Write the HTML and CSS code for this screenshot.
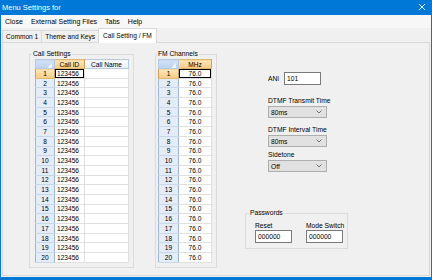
FILE: index.html
```html
<!DOCTYPE html>
<html lang="en">
<head>
  <meta charset="UTF-8">
  <title>Menu Settings</title>
  <link rel="stylesheet" href="styles.css">
</head>
<body>
  <div class="window">
    <!-- Title bar -->
    <div class="titlebar">
      <span class="title">Menu Settings for</span>
      <svg class="close-x" width="6" height="6" viewBox="0 0 6 6"><path d="M0 0 L6 6 M6 0 L0 6" stroke="#fff" stroke-width="0.9"/></svg>
    </div>

    <!-- Menu -->
    <div class="menubar">
      <span class="menu-item">Close</span>
      <span class="menu-item">External Setting Files</span>
      <span class="menu-item">Tabs</span>
      <span class="menu-item">Help</span>
    </div>

    <!-- Tabs -->
    <div class="tabstrip">
      <div class="tab">Common 1</div>
      <div class="tab">Theme and Keys</div>
      <div class="tab active">Call Setting / FM</div>
    </div>

    <div class="tabpage">
      <fieldset class="group calls">
        <legend>Call Settings</legend>
        <table class="grid">
          <colgroup><col class="c-head"><col class="c-id"><col class="c-name"></colgroup>
          <tr><th class="corner"><svg width="5" height="5" viewBox="0 0 5 5"><path d="M5 0 L5 5 L0 5 Z" fill="#f2f5f9"/></svg></th><th class="sel">Call ID</th><th>Call Name</th></tr>
          <tr><th class="sel">1</th><td class="cur">123456</td><td></td></tr>
          <tr><th>2</th><td>123456</td><td></td></tr>
          <tr><th>3</th><td>123456</td><td></td></tr>
          <tr><th>4</th><td>123456</td><td></td></tr>
          <tr><th>5</th><td>123456</td><td></td></tr>
          <tr><th>6</th><td>123456</td><td></td></tr>
          <tr><th>7</th><td>123456</td><td></td></tr>
          <tr><th>8</th><td>123456</td><td></td></tr>
          <tr><th>9</th><td>123456</td><td></td></tr>
          <tr><th>10</th><td>123456</td><td></td></tr>
          <tr><th>11</th><td>123456</td><td></td></tr>
          <tr><th>12</th><td>123456</td><td></td></tr>
          <tr><th>13</th><td>123456</td><td></td></tr>
          <tr><th>14</th><td>123456</td><td></td></tr>
          <tr><th>15</th><td>123456</td><td></td></tr>
          <tr><th>16</th><td>123456</td><td></td></tr>
          <tr><th>17</th><td>123456</td><td></td></tr>
          <tr><th>18</th><td>123456</td><td></td></tr>
          <tr><th>19</th><td>123456</td><td></td></tr>
          <tr><th>20</th><td>123456</td><td></td></tr>
        </table>
      </fieldset>

      <fieldset class="group fm">
        <legend>FM Channels</legend>
        <table class="grid">
          <colgroup><col class="c-head2"><col class="c-mhz"></colgroup>
          <tr><th class="corner"><svg width="5" height="5" viewBox="0 0 5 5"><path d="M5 0 L5 5 L0 5 Z" fill="#f2f5f9"/></svg></th><th class="sel">MHz</th></tr>
          <tr><th class="sel">1</th><td class="cur mid">76.0</td></tr>
          <tr><th>2</th><td class="mid">76.0</td></tr>
          <tr><th>3</th><td class="mid">76.0</td></tr>
          <tr><th>4</th><td class="mid">76.0</td></tr>
          <tr><th>5</th><td class="mid">76.0</td></tr>
          <tr><th>6</th><td class="mid">76.0</td></tr>
          <tr><th>7</th><td class="mid">76.0</td></tr>
          <tr><th>8</th><td class="mid">76.0</td></tr>
          <tr><th>9</th><td class="mid">76.0</td></tr>
          <tr><th>10</th><td class="mid">76.0</td></tr>
          <tr><th>11</th><td class="mid">76.0</td></tr>
          <tr><th>12</th><td class="mid">76.0</td></tr>
          <tr><th>13</th><td class="mid">76.0</td></tr>
          <tr><th>14</th><td class="mid">76.0</td></tr>
          <tr><th>15</th><td class="mid">76.0</td></tr>
          <tr><th>16</th><td class="mid">76.0</td></tr>
          <tr><th>17</th><td class="mid">76.0</td></tr>
          <tr><th>18</th><td class="mid">76.0</td></tr>
          <tr><th>19</th><td class="mid">76.0</td></tr>
          <tr><th>20</th><td class="mid">76.0</td></tr>
        </table>
      </fieldset>

      <div class="side">
        <div class="ani-row">
          <span class="ani-label">ANI</span>
          <div class="textbox ani">101</div>
        </div>

        <div class="field first">
          <div class="field-label">DTMF Transmit Time</div>
          <div class="combo">80ms<svg width="6" height="4" viewBox="0 0 6 4"><path d="M0.5 0.5 L3 3 L5.5 0.5" fill="none" stroke="#555" stroke-width="0.8"/></svg></div>
        </div>
        <div class="field">
          <div class="field-label">DTMF Interval Time</div>
          <div class="combo">80ms<svg width="6" height="4" viewBox="0 0 6 4"><path d="M0.5 0.5 L3 3 L5.5 0.5" fill="none" stroke="#555" stroke-width="0.8"/></svg></div>
        </div>
        <div class="field tight">
          <div class="field-label">Sidetone</div>
          <div class="combo">Off<svg width="6" height="4" viewBox="0 0 6 4"><path d="M0.5 0.5 L3 3 L5.5 0.5" fill="none" stroke="#555" stroke-width="0.8"/></svg></div>
        </div>

        <fieldset class="group passwords">
          <legend>Passwords</legend>
          <div class="pw-row">
            <div class="pw-col">
              <div class="field-label">Reset</div>
              <div class="textbox pw">000000</div>
            </div>
            <div class="pw-col">
              <div class="field-label">Mode Switch</div>
              <div class="textbox pw">000000</div>
            </div>
          </div>
        </fieldset>
      </div>
    </div>
  </div>
</body>
</html>
```

FILE: styles.css
```css
/* General */
* {
  box-sizing: border-box;
}

body {
  margin: 0;
  font-family: 'Liberation Sans', Arial, sans-serif;
  font-size: 6.7px;
  color: #000;
  background: #fff;
}

.window {
  width: 432px;
  height: 280px;
  border: 1px solid #0078d7;
  border-top: 0;
  border-bottom-width: 3px;
  background: #f0f0f0;
  display: flex;
  flex-direction: column;
}

/* Title bar */
.titlebar {
  flex: none;
  height: 15px;
  background: #0078d7;
  color: #fff;
  font-size: 7.5px;
  display: flex;
  align-items: center;
  justify-content: space-between;
  padding: 0 6px 1px 1px;
}

/* Menu */
.menubar {
  flex: none;
  height: 13px;
  display: flex;
  align-items: center;
  background: #f7f7f7;
  font-size: 7px;
}

.menu-item {
  padding: 0 4px;
}

/* Tabs */
.tabstrip {
  flex: none;
  height: 14px;
  display: flex;
  align-items: flex-end;
  padding-left: 1px;
  font-size: 6.6px;
}

.tab {
  height: 12px;
  line-height: 11px;
  padding: 0 3px;
  border: 1px solid #d9d9d9;
  border-bottom: 0;
  margin-right: -1px;
  background: #f0f0f0;
}

.tab.active {
  height: 15px;
  line-height: 13px;
  padding: 0 4px;
  margin-bottom: -1px;
  background: #fff;
  position: relative;
  z-index: 1;
}

.tabpage {
  flex: 1;
  margin: 0 1px 1px 1px;
  border: 1px solid #d9d9d9;
  display: flex;
  align-items: flex-start;
  padding-top: 7px;
}

/* Group boxes */
.group {
  margin: 0;
  min-width: 0;
  border: 1px solid #dcdcdc;
}

.group legend {
  padding: 0 1px;
  line-height: 8px;
}

.calls {
  margin-left: 26px;
  width: 105px;
  padding: 1px 4px 4px 5px;
}

.calls legend {
  margin-left: -3px;
}

.fm {
  margin-left: 21px;
  width: 62px;
  padding: 1px 4px 4px 2px;
}

.fm legend {
  margin-left: -1px;
}

/* Data grids */
.grid {
  border-collapse: collapse;
  table-layout: fixed;
  border: 1px solid #8c8c8c;
  background: #fff;
  font-size: 6.6px;
}

.c-head { width: 19px; }
.c-id { width: 30px; }
.c-name { width: 44px; }
.c-head2 { width: 20px; }
.c-mhz { width: 33px; }

.grid th {
  height: 9px;
  padding: 0;
  font-weight: normal;
  text-align: center;
  line-height: 7px;
  background: linear-gradient(#fbfcfe, #e9eff7);
  border: 1px solid #b9c9dd;
}

.grid tr + tr th {
  height: 9.7px;
  background: #e4ecf7;
  border-color: #c9d7e8 #9fb6d3;
}

.grid th.corner {
  background: linear-gradient(#d3e3f6, #bad1ee);
}

.grid th.corner svg {
  display: block;
  margin: 2px 2px 0 auto;
}

.grid th.sel,
.grid tr + tr th.sel {
  background: linear-gradient(#fde6bb, #f8cb82);
  border-color: #e2b86e #c9a263;
}

.grid td {
  height: 9.7px;
  padding: 0 0 0 2px;
  line-height: 7px;
  border: 1px solid #e0e0e0;
  white-space: nowrap;
}

.grid td.mid {
  text-align: center;
  padding: 0;
}

.grid td.cur {
  box-shadow: inset 0 0 0 1px #000;
}

/* Right column */
.side {
  margin-left: 28px;
  margin-top: 22px;
}

.ani-row {
  display: flex;
  align-items: center;
  padding-left: 23px;
}

.ani-label {
  width: 16px;
}

.textbox {
  height: 13px;
  border: 1px solid #7a7a7a;
  background: #fff;
  padding: 2px 0 0 2px;
  line-height: 7px;
}

.ani {
  width: 37px;
}

.field {
  padding-left: 23px;
  margin-top: 8px;
}

.field.first {
  margin-top: 12px;
}

.field.tight {
  margin-top: 4px;
}

.field-label {
  line-height: 8px;
  white-space: nowrap;
}

.combo {
  width: 59px;
  height: 12px;
  margin-top: 1px;
  border: 1px solid #adadad;
  background: #e1e1e1;
  padding: 0 4px 0 2px;
  display: flex;
  align-items: center;
  justify-content: space-between;
}

.passwords {
  margin-top: 37px;
  width: 103px;
  padding: 5px 4px 5px 9px;
}

.passwords legend {
  margin-left: -6px;
}

.pw-row {
  display: flex;
  gap: 14px;
}

.pw {
  width: 37px;
}
```
